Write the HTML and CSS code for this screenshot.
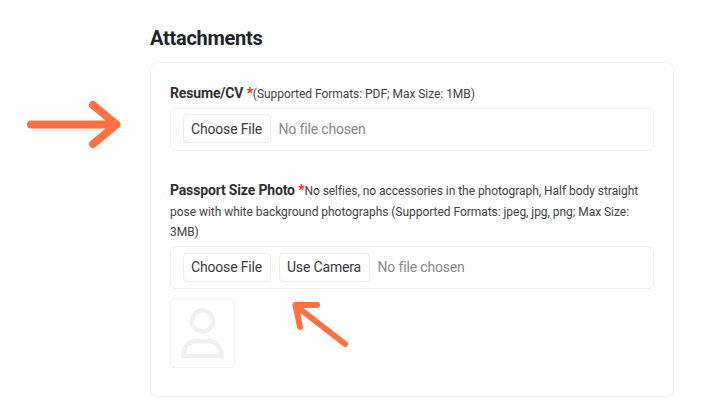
FILE: index.html
```html
<!DOCTYPE html>
<html lang="en">
<head>
<meta charset="UTF-8">
<title>Attachments</title>
<link rel="stylesheet" href="styles.css">
</head>

<body>

<div class="attachments">

<h1>Attachments</h1>

<div class="card">

<div class="group">
<div class="label">
<b>Resume/CV <span class="required">*</span></b><span class="hint">(Supported Formats: PDF; Max Size: 1MB)</span>
</div>
<div class="field">
<button>Choose File</button>
<span class="filename">No file chosen</span>
</div>
</div>

<div class="group">
<div class="label">
<b>Passport Size Photo <span class="required">*</span></b><span class="hint">No selfies, no accessories in the photograph, Half body straight<br>pose with white background photographs (Supported Formats: jpeg, jpg, png; Max Size:<br>3MB)</span>
</div>
<div class="field">
<button>Choose File</button>
<button class="camera">Use Camera</button>
<span class="filename">No file chosen</span>
</div>
<div class="preview">
<svg width="46" height="52" viewBox="0 0 46 52">
<circle cx="22.5" cy="14" r="10.5"/>
<path d="M3.5 49V47C4 39 9 34 16 34H28C35 34 40.5 39 41.5 47V49Z"/>
</svg>
</div>
</div>

</div>
</div>

<svg class="arrow arrow-resume" width="96" height="50" viewBox="0 0 96 50">
<path d="M5 25.5H90.5M67 6L90.5 25.5L67 45"/>
</svg>

<svg class="arrow arrow-camera" width="60" height="50" viewBox="0 0 60 50">
<path d="M55 44L5.5 5.5M27 5H5.5L10 27"/>
</svg>

</body>
</html>
```
FILE: styles.css
```css
*{
box-sizing:border-box;
}

body{
margin:0;
height:420px;
background:#fefefe;
color:#303133;
font-family:Roboto,sans-serif;
overflow:hidden;
}

.attachments{
width:524px;
margin-left:150px;
padding-top:26px;
}

h1{
margin:0 0 12px;
font-size:20px;
line-height:24px;
font-weight:700;
letter-spacing:-0.27px;
color:#212529;
}

.card{
height:335px;
padding:20px 19px 0;
border:1px solid #f2f2f2;
border-radius:7px;
}

.group{
margin-bottom:29px;
}

.label{
font-size:14px;
line-height:20.6px;
letter-spacing:-0.16px;
white-space:nowrap;
}

.required{
color:#f81c1c;
}

.hint{
font-size:12px;
line-height:18px;
letter-spacing:-0.04px;
color:#444;
}

.field{
display:flex;
align-items:center;
gap:8px;
width:484px;
height:43px;
margin-top:4.4px;
padding:0 11.5px 1px;
border:1px solid #efefef;
border-radius:6px;
}

button{
width:88px;
height:29px;
padding:0;
border:1px solid #ebedef;
border-radius:4px;
background:#fefefe;
color:#3b3b3b;
font:14px Roboto,sans-serif;
letter-spacing:-0.16px;
white-space:nowrap;
}

.camera{
width:91px;
}

.filename{
font-size:14px;
letter-spacing:-0.16px;
color:#888;
}

.preview{
display:flex;
justify-content:center;
align-items:center;
width:65px;
height:70px;
margin-top:9px;
border:1px solid #f2f2f2;
border-radius:4px;
}

.preview svg{
fill:none;
stroke:#f1f1f1;
stroke-width:4.5;
}

/* pointers lying over the form */
.arrow{
position:absolute;
fill:none;
stroke:#ff7043;
stroke-linecap:round;
stroke-linejoin:round;
}

.arrow-resume{
left:26px;
top:99px;
stroke-width:8;
}

.arrow-camera{
left:290px;
top:300px;
stroke-width:6;
}
```
